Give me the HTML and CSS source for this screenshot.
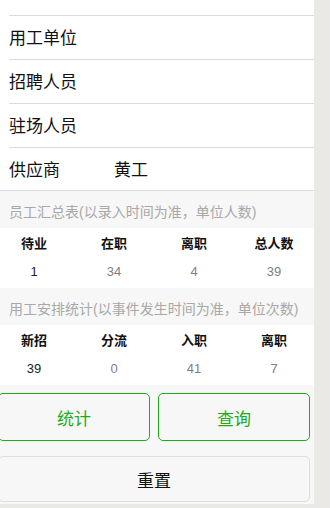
FILE: index.html
```html
<!DOCTYPE html>
<html lang="zh-CN">
<head>
    <meta charset="UTF-8">
    <meta name="viewport" content="width=device-width, initial-scale=1.0">
    <title>员工统计</title>
    <link rel="stylesheet" href="styles.css">
</head>
<body>
    <div class="viewport">
        <div class="page">
            <div class="list">
                <div class="cell cut"></div>
                <div class="cell">用工单位</div>
                <div class="cell">招聘人员</div>
                <div class="cell">驻场人员</div>
                <div class="cell last">
                    <span class="label">供应商</span>
                    <span class="value">黄工</span>
                </div>
            </div>

            <div class="caption">员工汇总表(以录入时间为准，单位人数)</div>
            <div class="stats">
                <div class="head">待业</div>
                <div class="head">在职</div>
                <div class="head">离职</div>
                <div class="head">总人数</div>
                <div class="num first">1</div>
                <div class="num">34</div>
                <div class="num">4</div>
                <div class="num">39</div>
            </div>

            <div class="caption">用工安排统计(以事件发生时间为准，单位次数)</div>
            <div class="stats">
                <div class="head">新招</div>
                <div class="head">分流</div>
                <div class="head">入职</div>
                <div class="head">离职</div>
                <div class="num first">39</div>
                <div class="num">0</div>
                <div class="num">41</div>
                <div class="num">7</div>
            </div>

            <div class="actions">
                <button class="btn green">统计</button>
                <button class="btn green">查询</button>
            </div>
            <div class="actions">
                <button class="btn plain">重置</button>
            </div>
        </div>
    </div>
</body>
</html>
```

FILE: styles.css
```css
body { margin: 0; background-color: #ebe9e6; font-family: "Liberation Sans", "Noto Sans CJK SC", sans-serif; }
.viewport { width: 314px; height: 504px; overflow: hidden; background-color: #f7f7f7; }
.page { width: 320px; margin-left: -6px; }

.list { background-color: #fff; border-bottom: 1px solid #dcdcdc; }
.cell { margin-left: 15px; height: 40px; padding-bottom: 3px; border-bottom: 1px solid #dcdcdc; display: flex; align-items: center; font-size: 17px; color: #111; }
.cell.cut { height: 15px; padding-bottom: 0; }
.cell.last { height: 40px; padding-bottom: 2px; border-bottom: none; }
.label { width: 105px; }

.caption { padding: 12px 15px 7px; line-height: 18px; font-size: 14px; color: #a8a8a8; white-space: nowrap; }
.stats { background-color: #fff; display: grid; grid-template-columns: repeat(4, 1fr); grid-template-rows: 30px 30px; text-align: center; }
.head { font-size: 13px; font-weight: bold; color: #111; line-height: 31px; }
.num { font-size: 13px; color: #808080; line-height: 28px; }
.num.first { color: #222; }

.actions { display: flex; gap: 8px; padding: 0 4px; margin-top: 8px; }
.actions + .actions { margin-top: 15px; }
.btn { flex: 1; height: 48px; border-radius: 5px; background-color: #f7f7f7; font-family: "Liberation Sans", "Noto Sans CJK SC", sans-serif; font-size: 17px; cursor: pointer; }
.btn.green { border: 1px solid #1aad19; color: #1aad19; }
.btn.plain { height: 46px; border: 1px solid #dedede; color: #111; }
```
